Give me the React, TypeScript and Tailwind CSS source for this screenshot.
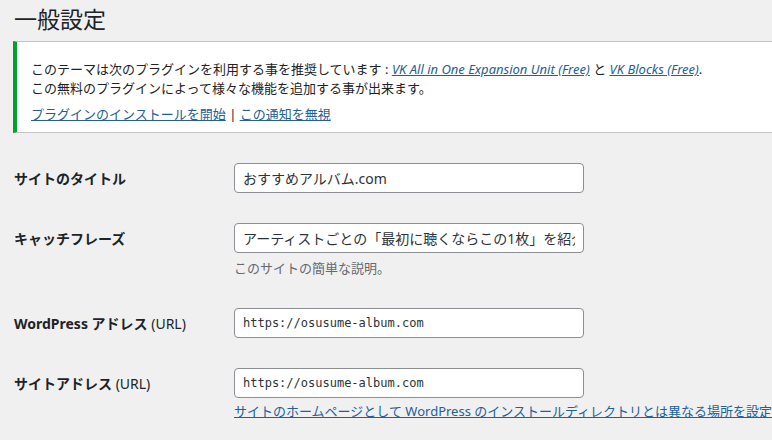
import React from "react";

const font = { fontFamily: '"Noto Sans", "Noto Sans CJK JP", sans-serif' };

function Row({ label, children }: { label: React.ReactNode; children: React.ReactNode }) {
  return (
    <div className="flex pt-[15px] pb-[15px]">
      <div className="w-[220px] shrink-0 h-[30px] flex items-center text-[14px] font-bold text-[#1d2327]">{label}</div>
      <div className="flex flex-col">{children}</div>
    </div>
  );
}

function Input({ value, mono }: { value: string; mono?: boolean }) {
  return (
    <input
      readOnly
      value={value}
      className={`w-[350px] h-[30px] rounded-[4px] border border-[#8c8f94] bg-white px-[8px] text-[#2c3338] outline-none ${mono ? "text-[12px]" : "text-[14px]"}`}
      style={mono ? { fontFamily: '"DejaVu Sans Mono", "Liberation Mono", monospace' } : font}
    />
  );
}

export default function App() {
  return (
    <div className="w-[772px] h-[440px] overflow-hidden bg-[#f0f0f1] text-[#1d2327]" style={font}>
      <h1 className="pl-[14px] pt-[4px] h-[41px] text-[23px] font-normal leading-[30px]">一般設定</h1>
      <div className="ml-[13px] w-[800px] bg-white border border-[#c3c4c7] border-l-[4px] border-l-[#00a32a] pl-[14px] pt-[18px] pb-[8px] text-[13px] leading-[19px]">
        <p>
          このテーマは次のプラグインを利用する事を推奨しています :{" "}
          <a className="text-[#23609a] underline italic">VK All in One Expansion Unit (Free)</a> と{" "}
          <a className="text-[#23609a] underline italic">VK Blocks (Free)</a>.
        </p>
        <p>この無料のプラグインによって様々な機能を追加する事が出来ます。</p>
        <p className="mt-[7px]">
          <a className="text-[#23609a] underline">プラグインのインストールを開始</a> |{" "}
          <a className="text-[#23609a] underline">この通知を無視</a>
        </p>
      </div>
      <div className="pl-[14px] pt-[15px]">
        <Row label="サイトのタイトル">
          <Input value="おすすめアルバム.com" />
        </Row>
        <Row label="キャッチフレーズ">
          <Input value="アーティストごとの「最初に聴くならこの1枚」を紹介するサイト" />
          <p className="mt-[6px] text-[13px] leading-[19px] text-[#646970]">このサイトの簡単な説明。</p>
        </Row>
        <Row label={<span>WordPress アドレス <span className="font-normal">(URL)</span></span>}>
          <Input value="https://osusume-album.com" mono />
        </Row>
        <Row label={<span>サイトアドレス <span className="font-normal">(URL)</span></span>}>
          <Input value="https://osusume-album.com" mono />
          <a className="mt-[4px] whitespace-nowrap text-[13px] leading-[19px] text-[#23609a] underline">
            サイトのホームページとして WordPress のインストールディレクトリとは異なる場所を設定する場合は、ここにアドレスを入力してください。
          </a>
        </Row>
      </div>
    </div>
  );
}
